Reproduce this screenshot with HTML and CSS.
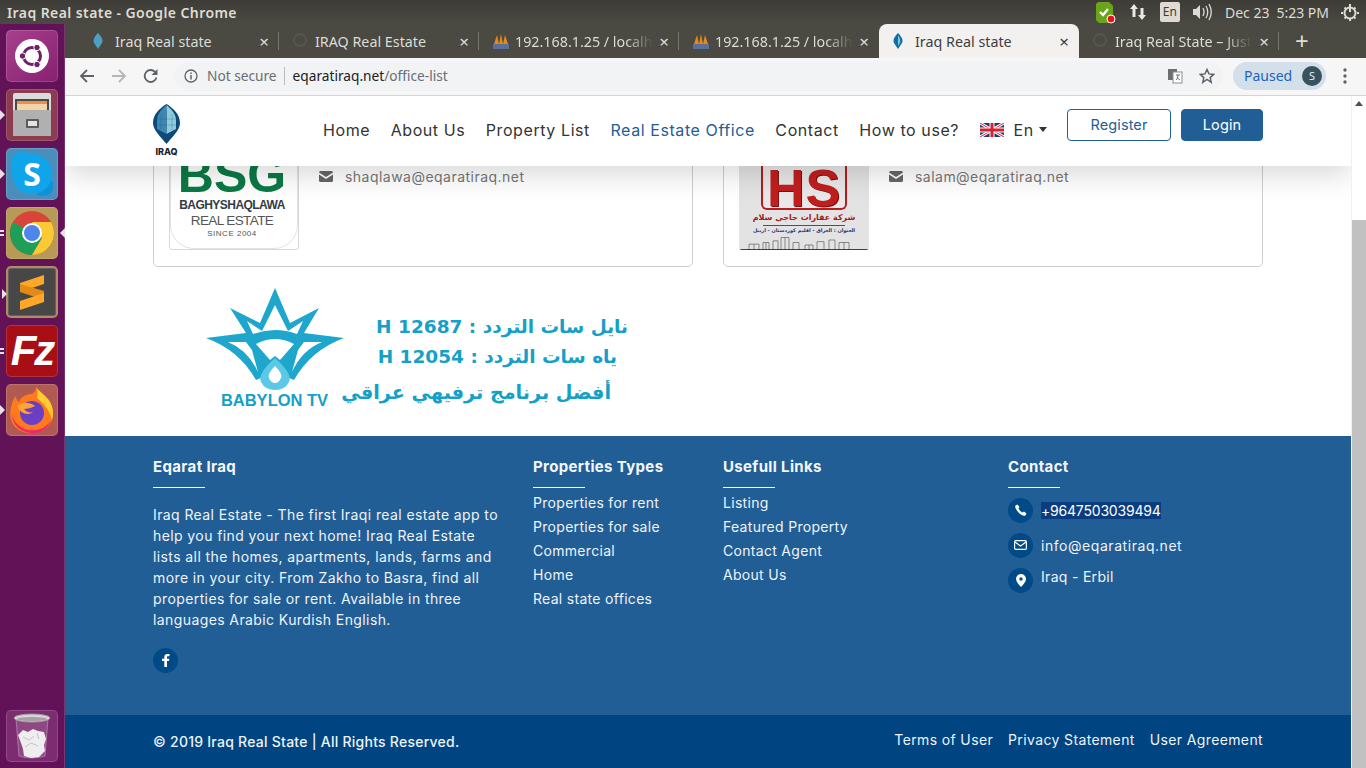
FILE: index.html
```html
<!DOCTYPE html>
<html lang="en">
<head>
  <meta charset="UTF-8">
  <meta name="viewport" content="width=device-width, initial-scale=1.0">
  <title>Iraq Real state</title>
  <link rel="stylesheet" href="styles.css">
</head>
<body>
  <div class="topbar">
    <span class="window-title">Iraq Real state - Google Chrome</span>
    <div class="tray">
      <svg class="tray-badge" width="24" height="24" viewBox="0 0 24 24"><path d="M5 2h11l4 4v14l-3 3H6l-3-3V4z" fill="#6aa41c"/><path d="M7 12l3 3 5-6" fill="none" stroke="#fff" stroke-width="2.4"/><circle cx="18" cy="19" r="4" fill="#e8141c" stroke="#fff"/></svg>
      <svg class="tray-arrows" width="18" height="18" viewBox="0 0 18 18"><path d="M5 1l4 5H6.500v8h-3V6H1zM13 17l-4-5h2.500V5h3v7H17z" fill="#ebe8e0"/></svg>
      <span class="tray-lang">En</span>
      <svg class="tray-volume" width="20" height="18" viewBox="0 0 20 18"><path d="M1 6h3l4-4v14l-4-4H1z" fill="#dfdbd2"/><path d="M11 5q2 4 0 8M14 3q3.500 6 0 12M17 1q4.500 8 0 16" fill="none" stroke="#dfdbd2" stroke-width="1.300"/></svg>
      <span class="tray-date">Dec 23</span>
      <span class="tray-time">5:23 PM</span>
      <svg class="tray-power" width="18" height="18" viewBox="0 0 18 18"><circle cx="9" cy="10" r="5.500" fill="none" stroke="#dfdbd2" stroke-width="2"/><path d="M9 1v8M9 1v3M2 10H0M18 10h-2M3.500 4.500l1.500 1.500M14.500 4.500L13 6M3.500 15.500L5 14M14.500 15.500L13 14M9 16v2" stroke="#dfdbd2" stroke-width="2"/></svg>
    </div>
  </div>

  <div class="desktop">
    <aside class="launcher">
      <div class="tile tile-ubuntu">
        <svg width="36" height="36" viewBox="0 0 36 36"><circle cx="18" cy="18" r="17" fill="#fff"/><circle cx="18" cy="18" r="8.500" fill="none" stroke="#6d2166" stroke-width="3"/><circle cx="8.500" cy="18" r="3.200" fill="#6d2166" stroke="#fff"/><circle cx="23" cy="9.500" r="3.200" fill="#6d2166" stroke="#fff"/><circle cx="23" cy="26.500" r="3.200" fill="#6d2166" stroke="#fff"/></svg>
      </div>
      <div class="tile tile-files has-arrow">
        <svg width="42" height="46" viewBox="0 0 42 46"><rect x="2" y="1" width="38" height="43" rx="2" fill="#dcdcdc"/><rect x="4" y="7" width="34" height="11" fill="#4a4a4a"/><rect x="6" y="9" width="30" height="3" fill="#e8904c"/><rect x="6" y="12" width="30" height="6" fill="#f4d3a6"/><rect x="2" y="18" width="38" height="26" rx="1" fill="#b0b0b0"/><rect x="15" y="27" width="13" height="9" rx="1" fill="#5b5b5b"/><rect x="17" y="29" width="9" height="5" fill="#e4e4e4"/></svg>
      </div>
      <div class="tile tile-skype has-arrow"><span class="skype-s">S</span></div>
      <div class="tile tile-chrome has-dash has-right-arrow">
        <svg width="46" height="46" viewBox="0 0 46 46"><circle cx="23" cy="23" r="22" fill="#d9453a"/><path d="M4 12A22 22 0 0 0 23 45l10-17z" fill="#1f9e55"/><path d="M23 12h19a22 22 0 0 1-19 33l10-17z" fill="#fbc934"/><circle cx="23" cy="23" r="10" fill="#fff"/><circle cx="23" cy="23" r="8" fill="#4e86ec"/></svg>
      </div>
      <div class="tile tile-sublime has-arrow">
        <svg width="26" height="36" viewBox="0 0 26 36"><path d="M1 9L25 1v9L1 18z" fill="#ffa726"/><path d="M1 18l24 8v-9L1 10z" fill="#e58a17"/><path d="M1 27l24-8v9L1 36z" fill="#ffa726"/></svg>
      </div>
      <div class="tile tile-filezilla has-dash"><span class="fz-text">Fz</span></div>
      <div class="tile tile-firefox has-arrow">
        <svg width="46" height="48" viewBox="0 0 46 48"><path d="M27 1c3 5 10 8 14 15 5 9 4 19-3 25-8 7-20 8-28 3C2 39-1 29 3 18c0-3 2-6 4-8 0 3 1 5 3 6 2-6 9-8 13-8 3-2 4-4 4-7z" fill="#ff7a1c"/><path d="M27 1c3 5 10 8 14 15 3 6 4 12 2 18-2-10-9-17-15-22 1-4 1-8-1-11z" fill="#ffcb33"/><path d="M3 28c2 11 13 18 24 16 7-1 12-5 15-10-3 9-12 14-21 13C11 46 3 38 3 28z" fill="#f2266b"/><circle cx="23" cy="27" r="12" fill="#6b3fc4"/><path d="M8 20c5-4 14-4 18 0-3 2-8 3-11 3 2 3 6 4 9 3-4 4-13 2-16-6z" fill="#ffa436"/></svg>
      </div>
      <div class="tile tile-trash">
        <svg width="38" height="46" viewBox="0 0 38 46"><path d="M3 6l3 37q13 4 26 0l3-37" fill="#ffffff22" stroke="#ffffff50"/><ellipse cx="19" cy="5" rx="18" ry="4" fill="#d6d6d6" stroke="#9c9c9c"/><ellipse cx="19" cy="6" rx="15" ry="2" fill="#a8a0a6"/><path d="M5 22l5-5 5 2 5-3 5 2 6 1 2 7-2 6 1 6-6 6-8 1-7-2-1-7-2-6z" fill="#eeeeee"/><path d="M10 24l6 3 5-4M12 34l6-4 7 3M24 20l2 6" fill="none" stroke="#c4c4c4"/></svg>
      </div>
    </aside>

    <main class="browser">
      <div class="tabstrip">
        <div class="tab">
          <svg class="favicon" width="10" height="16" viewBox="0 0 10 16"><path d="M5 0q6 6 4 10l-4 6-4-6Q-1 6 5 0z" fill="#4d9fc4"/></svg>
          <span class="tab-title">Iraq Real state</span>
          <span class="tab-close">×</span>
        </div>
        <div class="tab">
          <svg class="favicon" width="14" height="14" viewBox="0 0 14 14"><circle cx="7" cy="7" r="6" fill="none" stroke="#55544e" stroke-width="2"/></svg>
          <span class="tab-title">IRAQ Real Estate</span>
          <span class="tab-close">×</span>
        </div>
        <div class="tab">
          <svg class="favicon" width="16" height="16" viewBox="0 0 16 16"><path d="M1 11L4 2l2 9zM6 11l2-10 2 10zM10 11l2-9 3 9z" fill="#e58a17"/><rect x="0" y="11" width="16" height="5" fill="#5c6f9a"/></svg>
          <span class="tab-title tab-fade">192.168.1.25 / localh</span>
          <span class="tab-close">×</span>
        </div>
        <div class="tab">
          <svg class="favicon" width="16" height="16" viewBox="0 0 16 16"><path d="M1 11L4 2l2 9zM6 11l2-10 2 10zM10 11l2-9 3 9z" fill="#e58a17"/><rect x="0" y="11" width="16" height="5" fill="#5c6f9a"/></svg>
          <span class="tab-title tab-fade">192.168.1.25 / localh</span>
          <span class="tab-close">×</span>
        </div>
        <div class="tab tab-active">
          <svg class="favicon" width="10" height="16" viewBox="0 0 10 16"><path d="M5 0q6 6 4 10l-4 6-4-6Q-1 6 5 0z" fill="#0f6ea3"/><path d="M5 2q3 4 2 8l-2 3z" fill="#7cc3de"/></svg>
          <span class="tab-title">Iraq Real state</span>
          <span class="tab-close">×</span>
        </div>
        <div class="tab">
          <svg class="favicon" width="14" height="14" viewBox="0 0 14 14"><circle cx="7" cy="7" r="6" fill="none" stroke="#55544e" stroke-width="2"/></svg>
          <span class="tab-title tab-fade">Iraq Real State – Just</span>
          <span class="tab-close">×</span>
        </div>
        <span class="tab-plus">+</span>
      </div>

      <div class="toolbar">
        <svg class="nav-icon" width="16" height="16" viewBox="0 0 16 16"><path d="M15 8H2M8 2L2 8l6 6" fill="none" stroke="#5f6368" stroke-width="1.800"/></svg>
        <svg class="nav-icon" width="16" height="16" viewBox="0 0 16 16"><path d="M1 8h13M8 2l6 6-6 6" fill="none" stroke="#b4b7ba" stroke-width="1.800"/></svg>
        <svg class="nav-icon" width="16" height="16" viewBox="0 0 16 16"><path d="M13.500 9.500A6 6 0 1 1 12 3.800" fill="none" stroke="#5f6368" stroke-width="1.800"/><path d="M14.500 1v6h-6z" fill="#5f6368"/></svg>
        <div class="omnibox">
          <svg width="14" height="14" viewBox="0 0 14 14"><circle cx="7" cy="7" r="6" fill="none" stroke="#5f6368" stroke-width="1.300"/><path d="M7 6v4.500M7 3.500v1.500" stroke="#5f6368" stroke-width="1.500"/></svg>
          <span class="not-secure">Not secure</span>
          <span class="url"><b>eqaratiraq.net</b>/office-list</span>
          <svg class="translate-icon" width="16" height="16" viewBox="0 0 16 16"><rect x="1" y="1" width="9" height="11" fill="#6b6f73"/><rect x="6" y="4" width="9" height="11" fill="#fff" stroke="#8a8d90"/><path d="M9 7h4M11 7q0 4-2 5M10 9q1 2 3 3" stroke="#6b6f73" fill="none"/></svg>
          <svg class="star-icon" width="16" height="16" viewBox="0 0 16 16"><path d="M8 1.500l2 4.400 4.700.5-3.500 3.200 1 4.700L8 11.500l-4.200 2.800 1-4.700L1.300 6.400 6 5.900z" fill="none" stroke="#5f6368" stroke-width="1.500"/></svg>
        </div>
        <div class="paused">Paused <span class="avatar">S</span></div>
        <svg class="menu-dots" width="4" height="16" viewBox="0 0 4 16"><circle cx="2" cy="2" r="1.700" fill="#5f6368"/><circle cx="2" cy="8" r="1.700" fill="#5f6368"/><circle cx="2" cy="14" r="1.700" fill="#5f6368"/></svg>
      </div>

      <div class="viewport">
        <div class="page">
          <header class="site-header">
            <div class="container header-inner">
              <a class="brand">
                <svg width="27" height="40" viewBox="0 0 27 40"><path d="M13.500 0C20 4 27 10 27 19c0 7-8 14-13.500 21C8 33 0 26 0 19 0 10 7 4 13.500 0z" fill="#0d4a78"/><path d="M13.500 1C9 5 5 9 4 15v10l9.500 5z" fill="#3d88b0"/><path d="M13.500 1C18 5 22 9 23 15v10l-9.500 5z" fill="#8fcadd"/><path d="M8 10v16M13.500 6v24M19 10v16M4 15h19M4 21h19" stroke="#0d4a78" stroke-width=".5" opacity=".5"/></svg>
                <span class="brand-name">IRAQ</span>
              </a>
              <nav class="main-nav">
                <a>Home</a>
                <a>About Us</a>
                <a>Property List</a>
                <a class="current">Real Estate Office</a>
                <a>Contact</a>
                <a>How to use?</a>
                <span class="lang">
                  <svg width="24" height="14" viewBox="0 0 24 14"><rect width="24" height="14" fill="#26386e"/><path d="M0 0l24 14M24 0L0 14" stroke="#fff" stroke-width="3"/><path d="M0 0l24 14M24 0L0 14" stroke="#d8212f" stroke-width="1"/><path d="M12 0v14M0 7h24" stroke="#fff" stroke-width="5"/><path d="M12 0v14M0 7h24" stroke="#d8212f" stroke-width="3"/></svg>
                  <span>En</span>
                  <i class="caret"></i>
                </span>
              </nav>
              <a class="btn btn-outline">Register</a>
              <a class="btn btn-solid">Login</a>
            </div>
          </header>

          <div class="container">
            <section class="offices">
              <article class="office-card">
                <div class="office-logo logo-bsg">
                  <span class="bsg-mark">BSG</span>
                  <span class="bsg-name">BAGHYSHAQLAWA</span>
                  <span class="bsg-sub">REAL ESTATE</span>
                  <span class="bsg-since">SINCE 2004</span>
                </div>
                <div class="office-info">
                  <svg width="14" height="11" viewBox="0 0 14 11"><path d="M0 1.500Q0 0 1.500 0h11Q14 0 14 1.500L7 6zM0 3.500l7 4.500 7-4.500v6Q14 11 12.500 11h-11Q0 11 0 9.500z" fill="#666"/></svg>
                  <span>shaqlawa@eqaratiraq.net</span>
                </div>
              </article>
              <article class="office-card">
                <div class="office-logo logo-hs">
                  <div class="hs-frame"><span>HS</span></div>
                  <span class="hs-ar" dir="rtl">شركة عقارات حاجي سلام</span>
                  <span class="hs-rule"></span>
                  <span class="hs-addr" dir="rtl">العنوان : العراق - اقليم كوردستان - اربيل</span>
                  <svg class="hs-skyline" width="130" height="15" viewBox="0 0 130 18" preserveAspectRatio="none"><path d="M10 18v-7h10v7M15 18v-7M24 18v-9h6v9M27 18V9M34 18V7h5v11M42 18V3h8v15M46 18V3M54 18V9h6v9M66 18v-6h8v6M70 18v-6M78 18V8h7v10M90 18V6h6v12M100 18V9h10v9M105 18V9" fill="none" stroke="#666" stroke-width=".8"/><path d="M0 17.500h130" stroke="#222" stroke-width="1"/></svg>
                </div>
                <div class="office-info">
                  <svg width="14" height="11" viewBox="0 0 14 11"><path d="M0 1.500Q0 0 1.500 0h11Q14 0 14 1.500L7 6zM0 3.500l7 4.500 7-4.500v6Q14 11 12.500 11h-11Q0 11 0 9.500z" fill="#666"/></svg>
                  <span>salam@eqaratiraq.net</span>
                </div>
              </article>
            </section>

            <section class="banner">
              <div class="banner-brand">
                <svg width="140" height="104" viewBox="0 0 140 104">
                  <path d="M0 50L40 45 24 20 54 35 69 0 84 35 113 20 98 45 138 50Q105 62 88 92L69 84 50 92Q33 62 0 50z" fill="#1fa6cd"/>
                  <path d="M47 46L41 33 56 43 69 17 82 43 97 33 91 46Q69 38 47 46z" fill="#fff"/>
                  <path d="M22 54Q42 62 52 84L46 62 40 54zM116 54Q96 62 86 84L92 62 98 54z" fill="#fff"/>
                  <path d="M50 56Q69 46 88 56L74 72 69 68 64 72z" fill="#fff"/>
                  <path d="M69 70q-18 16-14 24 4 8 14 8t14-8q4-8-14-24z" fill="#5ac8e6"/>
                  <path d="M69 78q-8 8-6 12 2 5 6 5t6-5q2-4-6-12z" fill="#fff"/>
                </svg>
                <span class="banner-name">BABYLON TV</span>
              </div>
              <div class="banner-lines" dir="rtl">
                <p>نايل سات التردد : 12687 H</p>
                <p class="line-two">ياه سات التردد : 12054 H</p>
                <p class="line-three">أفضل برنامج ترفيهي عراقي</p>
              </div>
            </section>
          </div>

          <footer class="site-footer">
            <div class="container footer-grid">
              <div>
                <h4>Eqarat Iraq</h4>
                <p class="about">Iraq Real Estate - The first Iraqi real estate app to<br>help you find your next home! Iraq Real Estate<br>lists all the homes, apartments, lands, farms and<br>more in your city. From Zakho to Basra, find all<br>properties for sale or rent. Available in three<br>languages Arabic Kurdish English.</p>
                <a class="round-icon social">
                  <svg width="8" height="13" viewBox="0 0 8 13"><path d="M2.300 13V7H0V4.700h2.300V3C2.300 1 3.500 0 5.300 0H7.500v2.200H6c-.8 0-1 .4-1 1v1.500h2.400L7 7H5v6z" fill="#fff"/></svg>
                </a>
              </div>
              <div>
                <h4>Properties Types</h4>
                <ul>
                  <li>Properties for rent</li>
                  <li>Properties for sale</li>
                  <li>Commercial</li>
                  <li>Home</li>
                  <li>Real state offices</li>
                </ul>
              </div>
              <div>
                <h4>Usefull Links</h4>
                <ul>
                  <li>Listing</li>
                  <li>Featured Property</li>
                  <li>Contact Agent</li>
                  <li>About Us</li>
                </ul>
              </div>
              <div>
                <h4>Contact</h4>
                <div class="contact-list">
                  <div class="contact-row">
                    <span class="round-icon">
                      <svg width="12" height="12" viewBox="0 0 12 12"><path d="M2.500.5l2 2.500-1 1.500q1 2.500 4 4l1.500-1 2.500 2-1 2q-1 .5-2.500 0Q3 9.500.5 4 0 2.500 .5 1.500z" fill="#fff"/></svg>
                    </span>
                    <span class="selected">+9647503039494</span>
                  </div>
                  <div class="contact-row">
                    <span class="round-icon">
                      <svg width="13" height="10" viewBox="0 0 13 10"><rect x=".6" y=".6" width="11.800" height="8.800" rx="1.200" fill="none" stroke="#fff" stroke-width="1.200"/><path d="M1 2l5.500 4L12 2" fill="none" stroke="#fff" stroke-width="1.200"/></svg>
                    </span>
                    <span class="contact-mail">info@eqaratiraq.net</span>
                  </div>
                  <div class="contact-row row-location">
                    <span class="round-icon">
                      <svg width="10" height="13" viewBox="0 0 10 13"><path fill-rule="evenodd" d="M5 0a5 5 0 0 1 5 5q0 3-5 8-5-5-5-8a5 5 0 0 1 5-5zm0 3.300a1.700 1.700 0 1 0 0 3.400 1.700 1.700 0 0 0 0-3.400z" fill="#fff"/></svg>
                    </span>
                    <span>Iraq - Erbil</span>
                  </div>
                </div>
              </div>
            </div>
            <div class="copyright">
              <div class="container copyright-inner">
                <span class="copy-text">© 2019 Iraq Real State | All Rights Reserved.</span>
                <div class="legal">
                  <a>Terms of User</a>
                  <a>Privacy Statement</a>
                  <a>User Agreement</a>
                </div>
              </div>
            </div>
          </footer>
        </div>
        <div class="scrollbar">
          <i class="scroll-up"></i>
          <div class="scroll-thumb"></div>
        </div>
      </div>
    </main>
  </div>
</body>
</html>
```

FILE: styles.css
```css
* {
  box-sizing: border-box;
}

html,
body {
  margin: 0;
  height: 768px;
  overflow: hidden;
}

body {
  font-family: "Inter", "Noto Sans", sans-serif;
  background-color: #fff;
}

/* ubuntu top panel */
.topbar {
  height: 24px;
  background: linear-gradient(#3d3c37, #4a4943);
  color: #dfdbd2;
  font-family: "Noto Sans", sans-serif;
  font-size: 14px;
  display: flex;
  align-items: center;
  justify-content: space-between;
  padding: 0 7px;
}

.window-title {
  font-weight: 600;
  letter-spacing: 0.42px;
}

.tray {
  display: flex;
  align-items: center;
}

.tray-badge {
  margin-right: 12px;
}

.tray-arrows {
  margin-right: 13px;
}

.tray-lang {
  width: 20px;
  height: 20px;
  background-color: #dfdbd2;
  color: #3c3b37;
  font-size: 12px;
  text-align: center;
  line-height: 20px;
  border-radius: 2px;
  margin-right: 12px;
}

.tray-volume {
  margin-right: 13px;
}

.tray-date {
  margin-right: 7px;
}

.tray-time {
  margin-right: 12px;
}

.desktop {
  display: flex;
  height: 744px;
}

/* launcher */
.launcher {
  width: 65px;
  flex: none;
  background-color: #621358;
  border-right: 1px solid #7a3570;
  padding: 6px 0 6px 6px;
  display: flex;
  flex-direction: column;
  gap: 7px;
}

.tile {
  width: 52px;
  height: 52px;
  border-radius: 5px;
  display: flex;
  align-items: center;
  justify-content: center;
  position: relative;
  box-shadow: inset 0 0 0 1px rgba(255, 255, 255, 0.15);
}

.tile-ubuntu {
  background: linear-gradient(135deg, #a8408f, #86206f);
}

.tile-files {
  background-color: #8c3b50;
}

.tile-skype {
  background:
    radial-gradient(circle at 16px 15px, #10a5ea 11px, transparent 11.500px),
    radial-gradient(circle at 37px 38px, #0e93d8 10px, transparent 10.500px),
    #4c8ebb;
}

.skype-s {
  width: 40px;
  height: 40px;
  border-radius: 50%;
  background-color: #10a5ea;
  color: #fff;
  font-family: "Open Sans", sans-serif;
  font-weight: 700;
  font-size: 32px;
  line-height: 40px;
  text-align: center;
}

.tile-chrome {
  background-color: #b79a55;
}

.tile-sublime {
  background-color: #474747;
  border: 2px solid #b08a62;
}

.tile-filezilla {
  background-color: #a80f14;
}

.fz-text {
  color: #fff;
  font-family: "Liberation Sans", sans-serif;
  font-weight: 700;
  font-style: italic;
  font-size: 42px;
  letter-spacing: -2px;
}

.tile-firefox {
  background-color: #b05a52;
}

.tile-trash {
  background-color: #7d2c72;
  margin-top: auto;
}

.has-arrow::before,
.has-right-arrow::after {
  content: "";
  position: absolute;
  top: 21px;
  border-top: 5px solid transparent;
  border-bottom: 5px solid transparent;
}

.has-arrow::before {
  left: -6px;
  border-left: 5px solid #e6e0e4;
}

.has-right-arrow::after {
  right: -7px;
  border-right: 5px solid #e6e0e4;
}

.has-dash::before {
  content: "";
  position: absolute;
  left: -6px;
  top: 23px;
  width: 4px;
  height: 2px;
  background-color: #e6e0e4;
  box-shadow: 0 4px 0 #e6e0e4;
}

/* chrome window */
.browser {
  flex: 1;
  min-width: 0;
  display: flex;
  flex-direction: column;
}

.tabstrip {
  height: 34px;
  background-color: #4a4942;
  display: flex;
  align-items: flex-end;
  padding-left: 14px;
  font-family: "Noto Sans", sans-serif;
  font-size: 14.300px;
  color: #dcdcd8;
}

.tab {
  width: 200px;
  height: 34px;
  display: flex;
  align-items: center;
  position: relative;
}

.tab::after {
  content: "";
  position: absolute;
  right: 0;
  top: 8px;
  height: 18px;
  width: 1px;
  background-color: #76756e;
}

.tab-active {
  background-color: #f2f1f0;
  color: #3c4043;
  border-radius: 8px 8px 0 0;
}

.tab-active::after {
  display: none;
}

.tab:nth-child(4)::after {
  display: none;
}

.favicon {
  position: absolute;
  left: 20px;
  top: 9px;
  margin-left: -6px;
}

.tab-title {
  position: absolute;
  left: 36px;
  white-space: nowrap;
}

.tab-fade {
  -webkit-mask-image: linear-gradient(90deg, #000 80%, transparent 100%);
  mask-image: linear-gradient(90deg, #000 80%, transparent 100%);
}

.tab-close {
  position: absolute;
  right: 9px;
  font-size: 17px;
  width: 12px;
  text-align: center;
}

.tab-plus {
  font-size: 24px;
  font-weight: 400;
  margin-left: 16px;
  line-height: 34px;
  height: 34px;
}

.toolbar {
  height: 38px;
  background-color: #f6f6f6;
  border-bottom: 1px solid #d4d4d4;
  display: flex;
  align-items: center;
  padding: 0 0 2px 14px;
  font-family: "Noto Sans", sans-serif;
  font-size: 13.700px;
}

.nav-icon {
  margin-right: 16px;
}

.omnibox {
  width: 1049px;
  height: 30px;
  margin-left: -1px;
  background-color: #f1f3f4;
  border-radius: 15px;
  display: flex;
  align-items: center;
  padding-left: 10px;
  padding-right: 8px;
  color: #6a6e72;
}

.not-secure {
  margin-left: 9px;
  padding-right: 7px;
  border-right: 1px solid #b9bcbf;
  line-height: 18px;
}

.url {
  margin-left: 8px;
  color: #6a6e72;
}

.url b {
  font-weight: 400;
  color: #202124;
}

.translate-icon {
  margin-left: auto;
  margin-right: 16px;
}

.paused {
  margin-left: 10px;
  width: 93px;
  height: 28px;
  border-radius: 14px;
  background-color: #d3e0eb;
  color: #1a66b8;
  font-size: 14px;
  display: flex;
  align-items: center;
  justify-content: space-between;
  padding: 0 4px 0 11px;
}

.avatar {
  width: 20px;
  height: 20px;
  border-radius: 50%;
  background-color: #37535f;
  color: #e8eef2;
  font-size: 11px;
  text-align: center;
  line-height: 20px;
}

.menu-dots {
  margin-left: 17px;
}

.viewport {
  flex: 1;
  min-height: 0;
  display: flex;
  background-color: #fff;
}

.page {
  flex: 1;
  min-width: 0;
  position: relative;
  overflow: hidden;
  padding-top: 8px;
}

.container {
  width: 1110px;
  margin: 0 auto;
}

/* site header lies over the scrolled content */
.site-header {
  position: absolute;
  top: 0;
  left: 0;
  right: 0;
  height: 70px;
  background-color: #fff;
  box-shadow: 0 8px 30px rgba(0, 0, 0, 0.16);
  z-index: 2;
}

.header-inner {
  display: flex;
  align-items: flex-start;
  height: 100%;
}

.brand {
  display: flex;
  flex-direction: column;
  align-items: center;
  width: 27px;
  margin-top: 8px;
}

.brand-name {
  font-size: 9px;
  font-weight: 800;
  color: #1a2530;
  margin-top: 2px;
  letter-spacing: 0;
}

.main-nav {
  display: flex;
  align-items: center;
  margin-left: 143px;
  margin-top: 24px;
  height: 20px;
  gap: 20.500px;
  font-size: 16px;
  letter-spacing: 0.58px;
  color: #333;
  white-space: nowrap;
}

.main-nav .current {
  color: #225e96;
}

.lang {
  display: flex;
  align-items: center;
  gap: 10px;
}

.caret {
  width: 0;
  height: 0;
  margin-left: -5px;
  margin-top: -2px;
  border-left: 4.500px solid transparent;
  border-right: 4.500px solid transparent;
  border-top: 5px solid #333;
}

.btn {
  height: 32px;
  margin-top: 13px;
  font-size: 14.500px;
  letter-spacing: 0.1px;
  text-align: center;
  line-height: 30px;
  border: 1px solid #225e96;
  border-radius: 4px;
}

.btn-outline {
  width: 104px;
  margin-left: auto;
  color: #225e96;
  background-color: #fff;
}

.btn-solid {
  width: 82px;
  margin-left: 10px;
  color: #fff;
  background-color: #225e96;
}

/* office cards */
.offices {
  display: grid;
  grid-template-columns: 540px 540px;
  gap: 30px;
}

.office-card {
  height: 163px;
  border: 1px solid #cfcfcf;
  border-radius: 5px;
  padding: 15px;
  display: flex;
}

.office-logo {
  width: 130px;
  height: 130px;
  flex: none;
  border-radius: 3px;
  overflow: hidden;
  display: flex;
  flex-direction: column;
  align-items: center;
  justify-content: flex-end;
  position: relative;
}

.logo-bsg {
  border: 1px solid #d8d8d8;
  padding: 0 4px 10px 0;
  color: #555;
  font-family: "Liberation Sans", sans-serif;
}

/* round badge edge inside the square logo */
.logo-bsg::after {
  content: "";
  position: absolute;
  inset: 0;
  border: 1px solid #e2e2e2;
  border-radius: 0 0 24px 24px;
}

.bsg-mark {
  font-size: 50px;
  font-weight: 700;
  line-height: 46px;
  color: #0a7a45;
}

.bsg-name {
  font-size: 12px;
  font-weight: 700;
  line-height: 15px;
  color: #333b45;
  letter-spacing: -0.55px;
}

.bsg-sub {
  font-size: 13.500px;
  line-height: 15px;
  letter-spacing: -0.6px;
}

.bsg-since {
  font-size: 8px;
  line-height: 11px;
  letter-spacing: 0.5px;
}

.logo-hs {
  background-color: #e3e3e3;
  font-family: "DejaVu Sans", sans-serif;
}

.hs-frame {
  width: 86px;
  height: 70px;
  flex: none;
  background-color: #e8e8e8;
  border: 2px solid #b81c1c;
  border-top: 0;
  border-radius: 0 0 6px 6px;
  display: flex;
  justify-content: center;
  align-items: flex-end;
}

.hs-frame span {
  font-family: "Liberation Sans", sans-serif;
  font-weight: 700;
  font-size: 52px;
  line-height: 38px;
  margin-bottom: 1px;
  color: #c11f1f;
  letter-spacing: 1px;
  text-shadow: 1px 1px 0 #7a1010;
}

.hs-ar {
  font-size: 8px;
  font-weight: 700;
  color: #a3201f;
  line-height: 12px;
  margin-top: 2px;
}

.hs-rule {
  width: 82px;
  height: 1px;
  background-color: #444a8a;
  margin-top: 1px;
}

.hs-addr {
  font-size: 5px;
  font-weight: 700;
  color: #28306e;
  line-height: 9px;
}

.office-info {
  margin-left: 20px;
  margin-top: 47px;
  height: 18px;
  display: flex;
  align-items: center;
  gap: 12px;
  font-size: 14px;
  letter-spacing: 0.47px;
  color: #777;
}

/* satellite banner */
.banner {
  margin-left: 52px;
  width: 431px;
  height: 169px;
  padding-top: 21px;
  display: flex;
  color: #15a0c8;
}

.banner-brand {
  width: 137px;
  flex: none;
  display: flex;
  flex-direction: column;
  align-items: center;
}

.banner-brand svg {
  margin-left: 4px;
  flex: none;
}

.banner-name {
  font-family: "Liberation Sans", sans-serif;
  font-weight: 700;
  font-size: 16.500px;
  line-height: 16px;
  white-space: nowrap;
  margin-left: 2px;
}

.banner-lines {
  flex: 1;
  min-width: 0;
  font-family: "DejaVu Sans", sans-serif;
  font-weight: 700;
  font-size: 18.500px;
  white-space: nowrap;
  padding-top: 24px;
  padding-right: 8px;
}

.banner-lines p {
  margin: 0;
  line-height: 29.500px;
}

.banner-lines .line-two {
  margin-right: 11px;
}

.banner-lines .line-three {
  margin-right: 17px;
  margin-top: 7px;
  font-size: 19.200px;
}

/* footer */
.site-footer {
  background-color: #225e96;
  color: #eef3f8;
  font-size: 14px;
}

.footer-grid {
  height: 279px;
  display: grid;
  grid-template-columns: 380px 190px 285px 255px;
  padding-top: 22px;
}

.site-footer h4 {
  margin: 0 0 15px;
  padding-bottom: 12px;
  font-size: 15px;
  font-weight: 700;
  line-height: 18px;
  letter-spacing: 0.35px;
  color: #f4f7fa;
  position: relative;
}

.site-footer h4::after {
  content: "";
  position: absolute;
  left: 0;
  bottom: 0;
  width: 52px;
  height: 1px;
  background-color: #fff;
}

.about {
  margin: 16px 0 18px;
  line-height: 21px;
  letter-spacing: 0.4px;
  white-space: nowrap;
}

.site-footer ul {
  margin: -12px 0 0;
  padding: 0;
  list-style: none;
  line-height: 24px;
  letter-spacing: 0.3px;
}

.round-icon {
  width: 25px;
  height: 25px;
  flex: none;
  border-radius: 50%;
  background-color: #004a87;
  display: flex;
  align-items: center;
  justify-content: center;
}

.contact-list {
  display: flex;
  flex-direction: column;
  gap: 11px;
  margin-top: -5px;
  letter-spacing: 0.3px;
}

.contact-row {
  display: flex;
  align-items: center;
  gap: 8px;
  height: 24px;
}

.contact-mail {
  letter-spacing: 0.55px;
}

.row-location span:last-child {
  margin-top: -8px;
}

.selected {
  background-color: #0a3d80;
  color: #fff;
  line-height: 17px;
  letter-spacing: -0.2px;
}

.copyright {
  height: 53px;
  background-color: #004582;
  font-weight: 500;
}

.copyright-inner {
  height: 100%;
  display: flex;
  align-items: center;
  justify-content: space-between;
}

.copy-text {
  letter-spacing: 0.25px;
}

.legal {
  display: flex;
  gap: 15px;
  font-weight: 400;
  letter-spacing: 0.37px;
  margin-top: -5px;
}

/* page scrollbar */
.scrollbar {
  width: 15px;
  flex: none;
  background-color: #fff;
  border-left: 1px solid #f0f0f0;
  display: flex;
  flex-direction: column;
  align-items: center;
}

.scroll-up {
  margin-top: 5px;
  border-left: 4px solid transparent;
  border-right: 4px solid transparent;
  border-bottom: 5px solid #505050;
}

.scroll-thumb {
  width: 100%;
  height: 548px;
  margin-top: auto;
  background-color: #c1c1c1;
}
```
